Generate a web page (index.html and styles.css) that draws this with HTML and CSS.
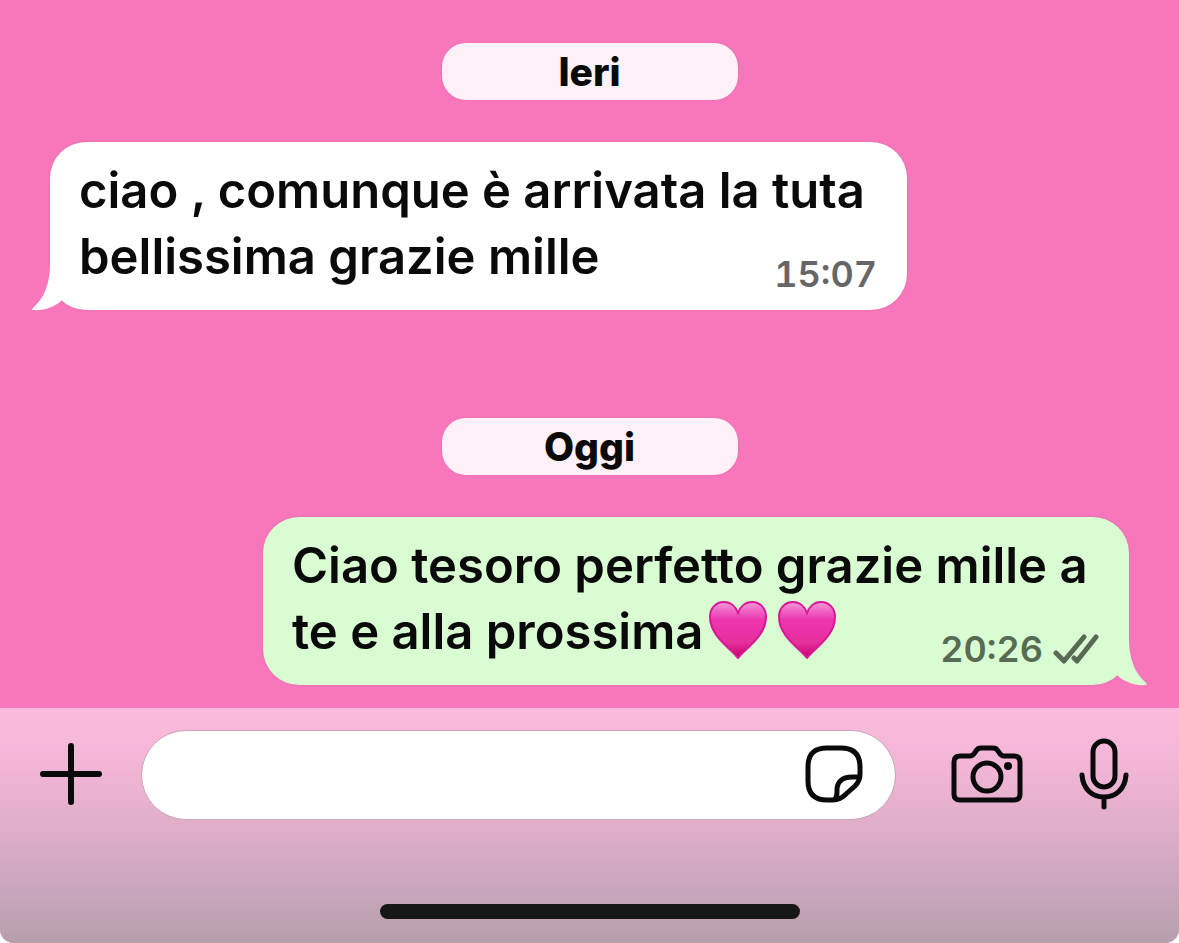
FILE: index.html
```html
<!DOCTYPE html>
<html lang="it">
<head>
    <meta charset="UTF-8">
    <meta name="viewport" content="width=device-width, initial-scale=1.0">
    <title>Chat</title>
    <link rel="stylesheet" href="styles.css">
</head>
<body>
    <div class="phone">
        <main class="chat">
            <div class="day">Ieri</div>

            <div class="bubble incoming">
                <p class="text">ciao , comunque è arrivata la tuta bellissima grazie mille<span class="meta"><time datetime="15:07">15:07</time></span></p>
                <svg class="tail" viewBox="0 0 36 70" aria-hidden="true">
                    <path d="M19 0V22C19 44 13 57 2 67Q0 69 2 69C13 70 23 66 30 60L36 50V0Z"/>
                </svg>
            </div>

            <div class="day">Oggi</div>

            <div class="bubble outgoing">
                <p class="text">Ciao tesoro perfetto grazie mille a te e alla prossima<svg class="heart" viewBox="0 0 58 58" role="img" aria-label="cuore">
                        <defs>
                            <linearGradient id="heartFill" x1="0" y1="0" x2="0" y2="1">
                                <stop offset="0" stop-color="#f79ad8"/>
                                <stop offset="0.15" stop-color="#f068c4"/>
                                <stop offset="0.32" stop-color="#ee35b0"/>
                                <stop offset="0.72" stop-color="#e5309d"/>
                                <stop offset="1" stop-color="#c8006c"/>
                            </linearGradient>
                        </defs>
                        <path d="M29 57C23 48 1 36 1 16C1 7 7 1 15 1C22 1 27 6 29 12C31 6 36 1 43 1C51 1 57 7 57 16C57 36 35 48 29 57Z" fill="url(#heartFill)" stroke="#d91798" stroke-width="2"/>
                    </svg><svg class="heart" viewBox="0 0 58 58" role="img" aria-label="cuore">
                        <path d="M29 57C23 48 1 36 1 16C1 7 7 1 15 1C22 1 27 6 29 12C31 6 36 1 43 1C51 1 57 7 57 16C57 36 35 48 29 57Z" fill="url(#heartFill)" stroke="#d91798" stroke-width="2"/>
                    </svg><span class="meta">
                        <time datetime="20:26">20:26</time>
                        <svg class="checks" viewBox="0 0 46 30" role="img" aria-label="consegnato">
                            <path d="M3 19L11 27L31 3M21 24L24 27L43 3"/>
                        </svg>
                    </span></p>
                <svg class="tail" viewBox="0 0 36 70" aria-hidden="true">
                    <path d="M19 0V22C19 44 13 57 2 67Q0 69 2 69C13 70 23 66 30 60L36 50V0Z"/>
                </svg>
            </div>
        </main>

        <footer class="bottom-bar">
            <form class="composer">
                <button type="button" class="icon-button" aria-label="Allega">
                    <svg class="plus" viewBox="0 0 62 62"><path d="M31 3V59M3 31H59"/></svg>
                </button>
                <div class="field">
                    <input type="text" class="message-input" aria-label="Messaggio">
                    <button type="button" class="icon-button" aria-label="Adesivi">
                        <svg class="sticker" viewBox="0 0 58 58">
                            <path d="M22 3H36C49 3 55 10 55 22V29C55 34 54 37 50 41L41 49C36 54 33 55 28 55H22C9 55 3 48 3 36V22C3 9 9 3 22 3Z"/>
                            <path d="M54 32H47C37 32 32 37 32 45C32 50 32 52 30 54"/>
                        </svg>
                    </button>
                </div>
                <button type="button" class="icon-button" aria-label="Fotocamera">
                    <svg class="camera" viewBox="0 0 72 58">
                        <path d="M9 11H19C22 11 23 9 25 6C26 4 28 3 30 3H42C44 3 46 4 47 6C49 9 50 11 53 11H63Q69 11 69 17V49Q69 55 63 55H9Q3 55 3 49V17Q3 11 9 11Z"/>
                        <circle cx="36" cy="32" r="14"/>
                        <circle class="dot" cx="57" cy="21" r="4"/>
                    </svg>
                </button>
                <button type="button" class="icon-button" aria-label="Messaggio vocale">
                    <svg class="mic" viewBox="0 0 50 72">
                        <rect x="14" y="3" width="22" height="46" rx="11"/>
                        <path d="M3 37C4 51 13 59 25 59S46 51 47 37M25 59V69"/>
                    </svg>
                </button>
            </form>
            <div class="home-indicator"></div>
        </footer>
    </div>
</body>
</html>
```

FILE: styles.css
```css
* {
    margin: 0;
    padding: 0;
    box-sizing: border-box;
    font-family: Inter, 'Liberation Sans', sans-serif;
}

body {
    background-color: #fff;
    color: #0a0a0a;
}

.phone {
    display: flex;
    flex-direction: column;
    min-height: 100vh;
    background-color: #f876bb;
    border-radius: 0 0 14px 14px;
    overflow: hidden;
}

.chat {
    flex: 1;
    display: flex;
    flex-direction: column;
    padding: 43px 50px 23px;
}

.day {
    align-self: center;
    width: 296px;
    margin-bottom: 42px;
    border-radius: 24px;
    background-color: #fef0f7;
    box-shadow: 0 0 2px rgba(0, 0, 0, 0.12);
    font-size: 39px;
    font-weight: 800;
    line-height: 57px;
    text-align: center;
}

.bubble {
    position: relative;
    padding: 16px 30px 14px 29px;
    border-radius: 36px;
    box-shadow: 0 0 2px rgba(0, 0, 0, 0.15);
}

.incoming {
    margin-right: 222px;
    margin-bottom: 108px;
    background-color: #fff;
}

.outgoing {
    margin-left: 213px;
    background-color: #d9fcd2;
}

.text {
    font-size: 49px;
    font-weight: 600;
    line-height: 66px;
}

.heart {
    width: 58px;
    height: 58px;
    margin: 0 5px 0 6px;
    vertical-align: -10px;
}

.meta {
    float: right;
    display: flex;
    align-items: center;
    gap: 10px;
    margin-top: 28px;
    color: #666;
    font-size: 36px;
    font-weight: 600;
    font-variant-numeric: tabular-nums;
    line-height: 44px;
}

.outgoing .meta {
    color: #576b54;
}

.checks {
    width: 46px;
    height: 30px;
    fill: none;
    stroke: #576b54;
    stroke-width: 5;
    stroke-linecap: round;
    stroke-linejoin: round;
}

.tail {
    position: absolute;
    left: -19px;
    bottom: -1px;
    width: 36px;
    height: 70px;
    fill: #fff;
}

.outgoing .tail {
    left: auto;
    right: -19px;
    fill: #d9fcd2;
    transform: scaleX(-1);
}

.bottom-bar {
    display: flex;
    flex-direction: column;
    align-items: center;
    padding: 22px 0 24px;
    background-image: linear-gradient(#fbbbdd, #f2b5d6 25%, #deadc8 52%, #c7a5ba 80%, #b79fac);
}

.composer {
    display: flex;
    align-items: center;
    width: 100%;
    margin-bottom: 84px;
    padding: 0 50px 0 40px;
}

.field {
    flex: 1;
    display: flex;
    align-items: center;
    min-width: 0;
    height: 90px;
    margin: 0 55px 0 39px;
    padding: 0 32px 0 40px;
    border: 1px solid #c5a5b8;
    border-radius: 45px;
    background-color: #fff;
}

.message-input {
    flex: 1;
    width: 100%;
    min-width: 0;
    border: none;
    outline: none;
    background: none;
    font-size: 49px;
}

.icon-button {
    display: flex;
    padding-bottom: 2px;
    border: none;
    background: none;
    cursor: pointer;
}

.icon-button svg {
    fill: none;
    stroke: #0a0a0a;
    stroke-width: 5;
    stroke-linecap: round;
    stroke-linejoin: round;
}

.icon-button .plus {
    width: 62px;
    height: 62px;
    stroke-width: 6;
}

.sticker {
    width: 58px;
    height: 58px;
}

.camera {
    width: 72px;
    height: 58px;
    margin-right: 56px;
}

.icon-button .dot {
    fill: #0a0a0a;
    stroke: none;
}

.mic {
    width: 50px;
    height: 72px;
}

.home-indicator {
    width: 420px;
    height: 15px;
    border-radius: 8px;
    background-color: #171717;
}
```
